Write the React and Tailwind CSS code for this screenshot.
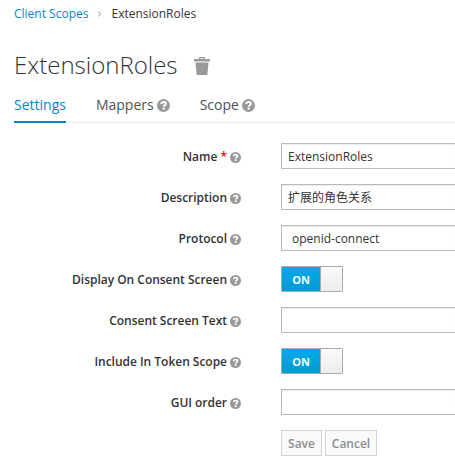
function Help({ className = 'size-[11px]' }) {
  return (
    <svg viewBox="0 0 12 12" className={`${className} shrink-0 text-[#999]`}>
      <circle cx="6" cy="6" r="6" fill="currentColor" />
      <path d="M3.900 4.600C4.100 3.300 4.900 2.700 6.100 2.700c1.300 0 2.100.7 2.100 1.700C8.200 5.700 6.200 5.700 6.200 7.200" fill="none" stroke="#fff" strokeWidth="1.800" />
      <rect x="5.200" y="8" width="2" height="1.800" fill="#fff" />
    </svg>
  );
}

function Trash() {
  return (
    <svg viewBox="0 0 16 18" className="h-[18px] w-4 text-[#999]" fill="currentColor">
      <path d="M5 2V1q0-1 1-1h4q1 0 1 1v1h5v2.500H0V2zm1.500 0h3V1.200h-3z" fillRule="evenodd" />
      <path d="M1.500 5.500h13L13.300 18H2.700z" />
    </svg>
  );
}

function Field({ label, required, children }) {
  return (
    <div className="flex h-[26px] items-center">
      <label className="flex w-[241px] items-center justify-end gap-[3px] pt-[2px] font-semibold tracking-[-0.02px] whitespace-nowrap">
        <span>
          {label}
          {required && <span className="text-[#f00]"> *</span>}
        </span>
        <Help />
      </label>
      <div className="ml-10 flex-1">{children}</div>
    </div>
  );
}

function TextBox({ children, className = 'pl-[6px]' }) {
  return (
    <div className={`flex h-[26px] items-center border border-r-0 border-[#bababa] bg-white pt-[2px] shadow-[inset_0_1px_1px_rgba(0,0,0,0.075)] ${className}`}>
      {children}
    </div>
  );
}

function Toggle() {
  return (
    <div className="flex h-[26px] w-[62px] overflow-hidden rounded-[1px] border border-[#aaa]">
      <span className="flex w-[38px] items-center justify-center bg-linear-to-b from-[#00a9ec] to-[#009bd3] pt-[2px] text-[11px] font-bold text-white">ON</span>
      <span className="flex-1 border-l border-[#aaa] bg-linear-to-b from-[#fafafa] to-[#ededed]" />
    </div>
  );
}

export default function App() {
  return (
    <main className="h-[461px] w-[455px] overflow-hidden bg-white font-['Open_Sans','Noto_Sans_CJK_SC',sans-serif] text-[12px] leading-[20px] text-[#333]">
      <nav className="flex h-[28px] items-center pl-[14px]">
        <a className="text-[#0088ce]">Client Scopes</a>
        <svg viewBox="0 0 5 6" className="mx-[9px] h-[6px] w-[5px]" fill="none" stroke="#9c9c9c">
          <path d="M1 .5 3.700 3 1 5.500" />
        </svg>
        <span>ExtensionRoles</span>
      </nav>
      <h1 className="flex h-[76px] items-center gap-4 pb-[1px] pl-[14px] text-[24px] leading-[26px] font-light">
        <span className="-mt-[1px]">ExtensionRoles</span>
        <Trash />
      </h1>
      <div className="ml-[14px] flex h-[19px] gap-[30px] border-b border-[#ececec] text-[14px] leading-[20px] text-[#4d5258]">
        <div className="-mt-[10px] flex h-[29px] items-center border-b-2 border-[#0088ce] pb-[5px] text-[#0088ce]">Settings</div>
        <div className="-mt-[10px] flex h-[29px] items-center gap-[3px] pb-[7px]">Mappers <Help className="size-[13px]" /></div>
        <div className="-mt-[10px] flex h-[29px] items-center gap-[3px] pb-[7px]">Scope <Help className="size-[13px]" /></div>
      </div>
      <form className="mt-5 flex flex-col gap-[15px]">
        <Field label="Name" required><TextBox>ExtensionRoles</TextBox></Field>
        <Field label="Description"><TextBox>扩展的角色关系</TextBox></Field>
        <Field label="Protocol"><TextBox className="pl-[10px]">openid-connect</TextBox></Field>
        <Field label="Display On Consent Screen"><Toggle /></Field>
        <Field label="Consent Screen Text"><TextBox /></Field>
        <Field label="Include In Token Scope"><Toggle /></Field>
        <Field label="GUI order"><TextBox /></Field>
        <div className="ml-[281px] flex gap-[3px] font-semibold text-[#8b8d8f]">
          <button type="button" className="h-[26px] w-[41px] border border-[#d1d1d1] bg-[#fafafa] pt-[2px]">Save</button>
          <button type="button" className="h-[26px] w-[52px] border border-[#d1d1d1] bg-[#fafafa] pt-[2px]">Cancel</button>
        </div>
      </form>
    </main>
  );
}
